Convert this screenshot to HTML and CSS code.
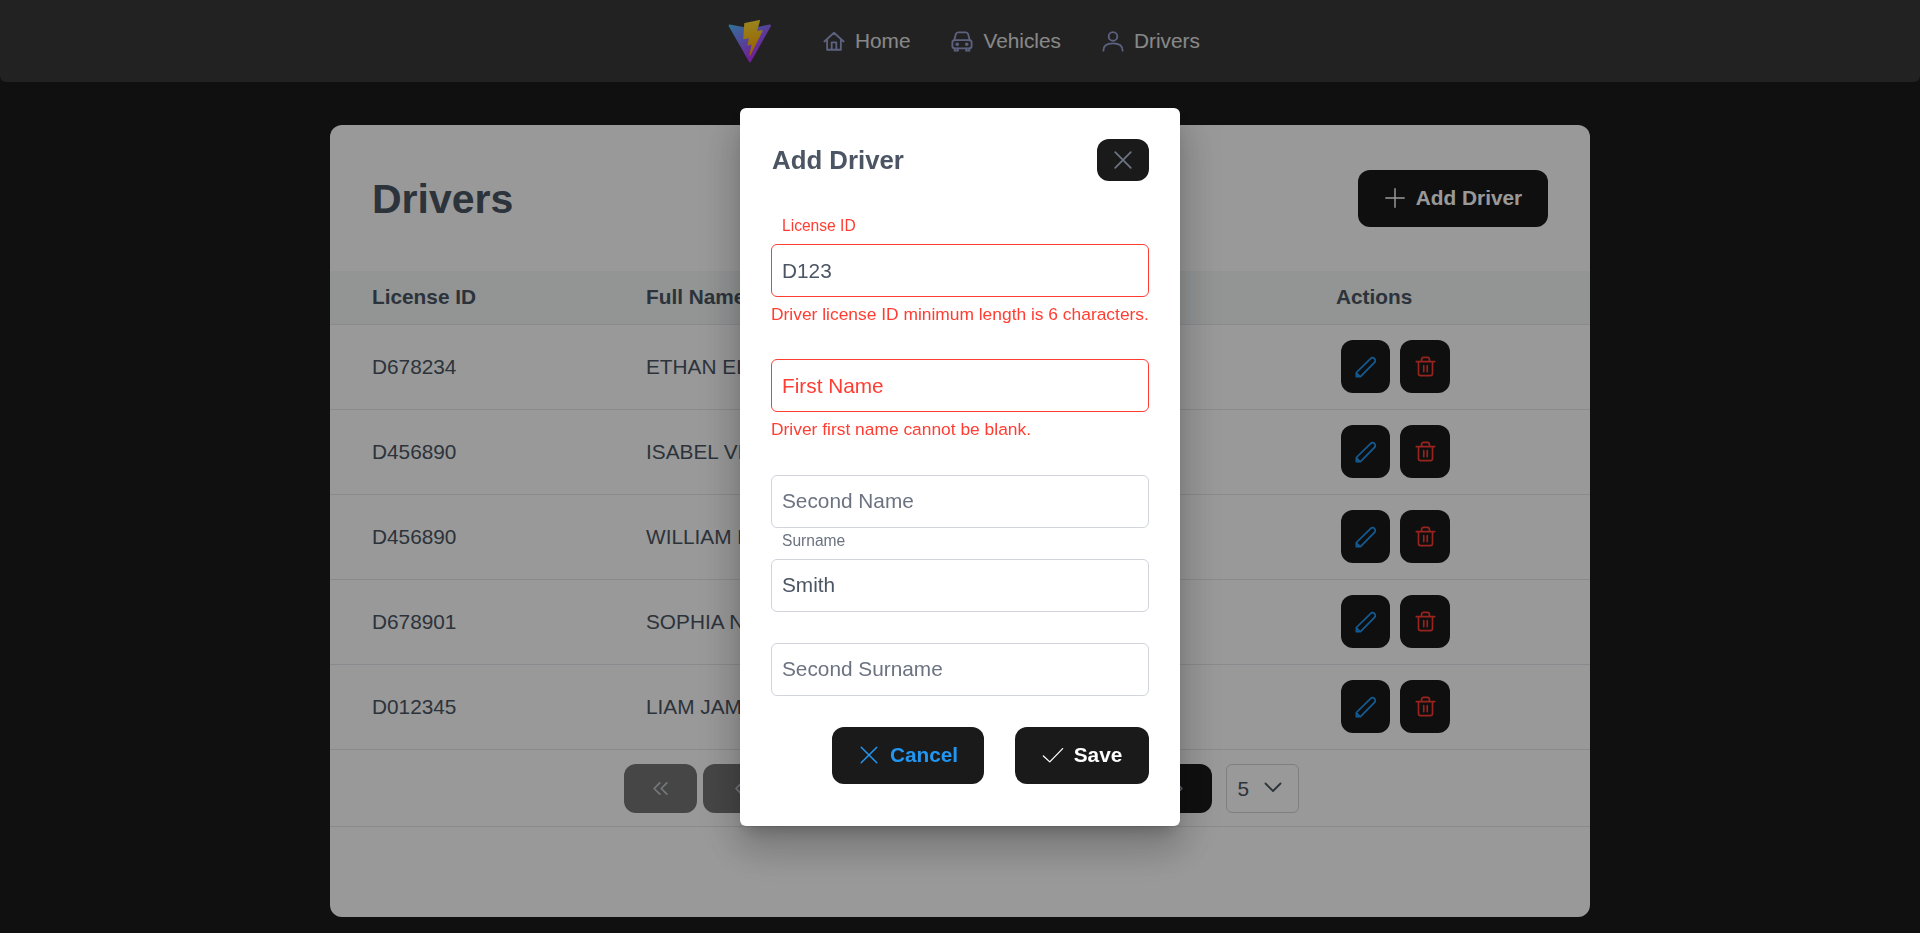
FILE: index.html
```html
<!DOCTYPE html>
<html lang="en">
<head>
  <meta charset="UTF-8" />
  <meta name="viewport" content="width=device-width, initial-scale=1.0"/>
  <title>Drivers</title>
  <link rel="stylesheet" href="styles.css">
</head>
<body>
  <!-- Icons -->
  <svg class="sprite" width="0" height="0">
    <symbol id="i-home" viewBox="0 0 24 24"><path d="M1.500 12.500 12 3l10.500 9.500M4.500 10v11.500h15V10M9.500 21.500V13.500h5v8"/></symbol>
    <symbol id="i-car" viewBox="0 0 24 24"><path d="M3.500 11.500 5.300 4.500Q5.800 2.500 8 2.500h8q2.200 0 2.700 2L20.500 11.500"/><rect x="1.500" y="11" width="21" height="9" rx="2.500"/><path d="M4 20v2.500h3.500V20M16.500 20v2.500H20V20"/><circle cx="6.800" cy="15.500" r="1"/><circle cx="17.200" cy="15.500" r="1"/></symbol>
    <symbol id="i-user" viewBox="0 0 24 24"><circle cx="12" cy="7" r="4.700"/><path d="M1.500 22.500c0-5.500 4.500-8 10.500-8s10.500 2.500 10.500 8"/></symbol>
    <symbol id="i-times" viewBox="0 0 24 24"><path d="M3.500 3.500l17 17M20.500 3.500l-17 17"/></symbol>
    <symbol id="i-check" viewBox="0 0 24 24"><path d="M1.500 13l7 6.500L22.500 5"/></symbol>
    <symbol id="i-plus" viewBox="0 0 24 24"><path d="M12 2v20M2 12h20"/></symbol>
    <symbol id="i-pencil" viewBox="0 0 24 24"><path d="M1.500 18 17 2.800a3 3 0 0 1 4.300 4.200L6 22.500H1.500ZM1.500 18.500l4 4"/></symbol>
    <symbol id="i-trash" viewBox="0 0 24 24"><path d="M1.500 6.500h21M7.500 6.500V4a2.500 2.500 0 0 1 2.500-2.500h4A2.500 2.500 0 0 1 16.500 4v2.500M4 6.500V20a2.500 2.500 0 0 0 2.500 2.500h11A2.500 2.500 0 0 0 20 20V6.500M10 11v7M14 11v7"/></symbol>
    <symbol id="i-double-left" viewBox="0 0 24 24"><path d="M11 4l-8 8 8 8M21 4l-8 8 8 8"/></symbol>
    <symbol id="i-left" viewBox="0 0 24 24"><path d="M15 4l-8 8 8 8"/></symbol>
    <symbol id="i-right" viewBox="0 0 24 24"><path d="M9 4l8 8-8 8"/></symbol>
    <symbol id="i-double-right" viewBox="0 0 24 24"><path d="M3 4l8 8-8 8M13 4l8 8-8 8"/></symbol>
    <symbol id="i-down" viewBox="0 0 24 24"><path d="M2 6l10 10L22 6"/></symbol>
  </svg>

  <nav class="navbar">
    <svg class="logo" viewBox="0 0 32 32">
      <defs>
        <linearGradient id="logoA" x1="6" y1="33" x2="235" y2="344" gradientUnits="userSpaceOnUse" gradientTransform="scale(.078)">
          <stop offset="0" stop-color="#41d1ff"/>
          <stop offset="1" stop-color="#bd34fe"/>
        </linearGradient>
        <linearGradient id="logoB" x1="194" y1="8" x2="236" y2="292" gradientUnits="userSpaceOnUse" gradientTransform="scale(.078)">
          <stop offset="0" stop-color="#ffea83"/>
          <stop offset=".08" stop-color="#ffdd35"/>
          <stop offset="1" stop-color="#ffa800"/>
        </linearGradient>
      </defs>
      <path fill="url(#logoA)" d="M29.883 6.146 16.622 29.86a.72.72 0 0 1-1.255.005L1.842 6.148a.72.72 0 0 1 .754-1.07l13.276 2.373a.72.72 0 0 0 .256 0l12.998-2.37a.72.72 0 0 1 .757 1.065Z"/>
      <path fill="url(#logoB)" d="M22.264 2.007 12.45 3.93a.36.36 0 0 0-.29.332l-.604 10.195a.36.36 0 0 0 .44.372l2.732-.63a.36.36 0 0 1 .434.423l-.812 3.975a.36.36 0 0 0 .457.417l1.688-.513a.36.36 0 0 1 .457.418l-1.29 6.244c-.08.39.44.604.656.269l.145-.224 8.002-15.97a.36.36 0 0 0-.39-.516l-2.814.543a.36.36 0 0 1-.414-.454l1.836-6.366a.36.36 0 0 0-.414-.455Z"/>
    </svg>
    <a class="nav-link"><svg class="icon"><use href="#i-home"/></svg>Home</a>
    <a class="nav-link"><svg class="icon"><use href="#i-car"/></svg>Vehicles</a>
    <a class="nav-link"><svg class="icon"><use href="#i-user"/></svg>Drivers</a>
  </nav>

  <main class="page">
    <section class="card">
      <div class="card-head">
        <h1>Drivers</h1>
        <button class="btn btn-add"><svg class="icon"><use href="#i-plus"/></svg>Add Driver</button>
      </div>

      <table class="drivers">
        <thead>
          <tr><th>License ID</th><th>Full Name</th><th>Actions</th></tr>
        </thead>
        <tbody>
          <tr>
            <td>D678234</td><td>ETHAN ELLIS</td>
            <td><div class="actions"><button class="btn-icon edit"><svg class="icon"><use href="#i-pencil"/></svg></button><button class="btn-icon del"><svg class="icon"><use href="#i-trash"/></svg></button></div></td>
          </tr>
          <tr>
            <td>D456890</td><td>ISABEL VEGA</td>
            <td><div class="actions"><button class="btn-icon edit"><svg class="icon"><use href="#i-pencil"/></svg></button><button class="btn-icon del"><svg class="icon"><use href="#i-trash"/></svg></button></div></td>
          </tr>
          <tr>
            <td>D456890</td><td>WILLIAM B.</td>
            <td><div class="actions"><button class="btn-icon edit"><svg class="icon"><use href="#i-pencil"/></svg></button><button class="btn-icon del"><svg class="icon"><use href="#i-trash"/></svg></button></div></td>
          </tr>
          <tr>
            <td>D678901</td><td>SOPHIA NELSON</td>
            <td><div class="actions"><button class="btn-icon edit"><svg class="icon"><use href="#i-pencil"/></svg></button><button class="btn-icon del"><svg class="icon"><use href="#i-trash"/></svg></button></div></td>
          </tr>
          <tr>
            <td>D012345</td><td>LIAM JAMES</td>
            <td><div class="actions"><button class="btn-icon edit"><svg class="icon"><use href="#i-pencil"/></svg></button><button class="btn-icon del"><svg class="icon"><use href="#i-trash"/></svg></button></div></td>
          </tr>
        </tbody>
      </table>

      <div class="paginator">
        <button class="page-btn off"><svg class="icon"><use href="#i-double-left"/></svg></button>
        <button class="page-btn off"><svg class="icon"><use href="#i-left"/></svg></button>
        <button class="page-btn wide">1</button>
        <button class="page-btn wide">2</button>
        <button class="page-btn wide">3</button>
        <button class="page-btn"><svg class="icon"><use href="#i-right"/></svg></button>
        <button class="page-btn"><svg class="icon"><use href="#i-double-right"/></svg></button>
        <div class="rows-select">5<svg class="icon"><use href="#i-down"/></svg></div>
      </div>
    </section>
  </main>

  <div class="mask">
    <div class="dialog">
      <div class="dialog-head">
        <h2>Add Driver</h2>
        <button class="btn-close"><svg class="icon"><use href="#i-times"/></svg></button>
      </div>

      <form class="form">
        <div class="field invalid">
          <label>License ID</label>
          <input type="text" value="D123">
          <small>Driver license ID minimum length is 6 characters.</small>
        </div>
        <div class="field invalid">
          <label></label>
          <input type="text" placeholder="First Name">
          <small>Driver first name cannot be blank.</small>
        </div>
        <div class="field">
          <label></label>
          <input type="text" placeholder="Second Name">
        </div>
        <div class="field">
          <label>Surname</label>
          <input type="text" value="Smith">
        </div>
        <div class="field">
          <label></label>
          <input type="text" placeholder="Second Surname">
        </div>
      </form>

      <div class="dialog-foot">
        <button class="btn btn-cancel"><svg class="icon"><use href="#i-times"/></svg>Cancel</button>
        <button class="btn btn-save"><svg class="icon"><use href="#i-check"/></svg>Save</button>
      </div>
    </div>
  </div>
</body>
</html>
```

FILE: styles.css
```css
* {
  margin: 0;
  padding: 0;
  box-sizing: border-box;
}

html, body {
  height: 100%;
  background-color: #1c1c1c;
  font-family: "Liberation Sans", Arial, sans-serif;
  color: #4b5563;
  overflow: hidden;
}

button, input {
  font-family: inherit;
}

.sprite {
  display: block;
  height: 0;
}

.icon {
  fill: none;
  stroke: currentColor;
  stroke-width: 1.6;
  stroke-linecap: round;
  stroke-linejoin: round;
  flex-shrink: 0;
}

/* Navbar */
.navbar {
  height: 82px;
  background-color: #3a3a3a;
  border-radius: 0 0 6px 6px;
  display: flex;
  align-items: center;
  padding-left: 726px;
}

.logo {
  width: 48px;
  height: 48px;
  margin-right: 49px;
}

.nav-link {
  display: flex;
  align-items: center;
  gap: 10px;
  margin-right: 41px;
  font-size: 20.800px;
  color: #e3e3e3;
}

.nav-link .icon {
  width: 22px;
  height: 22px;
  stroke-width: 2;
  color: #9aa2d4;
}

/* Card */
.page {
  display: flex;
  justify-content: center;
  padding-top: 43px;
}

.card {
  width: 1260px;
  height: 792px;
  background-color: #fff;
  border-radius: 12px;
}

.card-head {
  height: 146px;
  padding: 0 42px;
  display: flex;
  justify-content: space-between;
  align-items: center;
}

.card-head h1 {
  margin-top: 2px;
  font-size: 41px;
  font-weight: 700;
}

.btn {
  border: none;
  border-radius: 12px;
  background-color: #1a1a1a;
  font-weight: 700;
  font-size: 20.800px;
  display: flex;
  align-items: center;
  justify-content: center;
  color: #fff;
}

.btn-add {
  width: 190px;
  height: 57px;
  gap: 10px;
}

.btn-add .icon {
  width: 22px;
  height: 22px;
}

/* Table */
.drivers {
  width: 100%;
  border-collapse: collapse;
  table-layout: fixed;
}

.drivers th:nth-child(1) { width: 274px; }
.drivers th:nth-child(3) { width: 296px; }

.drivers th {
  height: 53px;
  padding-left: 42px;
  text-align: left;
  font-size: 20.800px;
  font-weight: 700;
  background-color: #f3f8f7;
  border-bottom: 1px solid #e5e7eb;
}

.drivers td {
  height: 85px;
  padding-left: 42px;
  font-size: 20.800px;
  border-bottom: 1px solid #e5e7eb;
  white-space: nowrap;
}

.actions {
  display: flex;
  gap: 10px;
  margin-left: 5px;
}

.btn-icon {
  width: 50px;
  height: 53px;
  border: none;
  border-radius: 12px;
  background-color: #1a1a1a;
  display: flex;
  align-items: center;
  justify-content: center;
}

.btn-icon .icon {
  width: 22px;
  height: 22px;
  stroke-width: 1.900;
}

.btn-icon.edit {
  width: 49px;
  color: #2196f3;
}

.btn-icon.del {
  color: #ff3d32;
}

.btn-icon.del .icon {
  width: 21px;
  height: 21px;
}

/* Paginator */
.paginator {
  height: 77px;
  padding-top: 1px;
  border-bottom: 1px solid #e5e7eb;
  padding-left: 294px;
  display: flex;
  align-items: center;
  gap: 6px;
}

.page-btn {
  width: 73px;
  height: 49px;
  border: none;
  border-radius: 12px;
  background-color: #1a1a1a;
  color: #9ca3af;
  font-size: 20.800px;
  display: flex;
  align-items: center;
  justify-content: center;
}

.page-btn.wide {
  width: 86.500px;
}

.page-btn.off {
  opacity: 0.6;
}

.page-btn .icon {
  width: 17px;
  height: 17px;
  stroke-width: 2.400;
}

.rows-select {
  width: 73px;
  height: 49px;
  margin-left: 8px;
  border: 1px solid #d1d5db;
  border-radius: 6px;
  padding: 2px 0 0 11px;
  font-size: 20.800px;
  display: flex;
  align-items: center;
  justify-content: space-between;
}

.rows-select .icon {
  width: 18px;
  height: 18px;
  margin: -3px 16px 0 0;
  stroke-width: 2.400;
}

/* Dialog */
.mask {
  position: fixed;
  inset: 0;
  background-color: rgba(0, 0, 0, 0.4);
}

.dialog {
  position: absolute;
  top: 108px;
  left: 740px;
  width: 440px;
  height: 718px;
  padding: 31px;
  background-color: #fff;
  border-radius: 6px;
  box-shadow: 0 11px 15px -7px rgba(0, 0, 0, 0.2), 0 24px 38px 3px rgba(0, 0, 0, 0.14), 0 9px 46px 8px rgba(0, 0, 0, 0.12);
}

.dialog-head {
  height: 42px;
  margin-bottom: 32px;
  display: flex;
  justify-content: space-between;
  align-items: center;
}

.dialog-head h2 {
  font-size: 25.800px;
  font-weight: 700;
  margin-left: 1px;
}

.btn-close {
  width: 52px;
  height: 42px;
  border: none;
  border-radius: 12px;
  background-color: #1a1a1a;
  color: #6b7280;
  display: flex;
  align-items: center;
  justify-content: center;
}

.btn-close .icon {
  width: 22px;
  height: 22px;
  stroke-width: 2;
}

.field label {
  display: block;
  height: 31px;
  padding: 4px 0 0 11px;
  font-size: 15.600px;
  color: #6b7280;
}

.field input {
  display: block;
  width: 100%;
  height: 53px;
  padding: 0 10px;
  border: 1px solid #d1d5db;
  border-radius: 6px;
  font-size: 20.800px;
  color: #4b5563;
  outline: none;
}

.field input::placeholder {
  color: #6b7280;
}

.field small {
  display: block;
  height: 31.400px;
  padding-top: 7px;
  font-size: 17.400px;
  color: #ff3d32;
}

.field.invalid label {
  color: #ff3d32;
}

.field.invalid input {
  border-color: #ff3d32;
}

.field.invalid input::placeholder {
  color: #ff3d32;
}

.dialog-foot {
  margin-top: 31px;
  display: flex;
  justify-content: flex-end;
  gap: 31px;
}

.dialog-foot .btn {
  height: 57px;
  gap: 10px;
}

.dialog-foot .icon {
  width: 22px;
  height: 22px;
}

.btn-cancel {
  width: 152px;
  color: #2196f3;
}

.btn-save {
  width: 134px;
}

.btn-save .icon {
  stroke-width: 1.400;
}
```
